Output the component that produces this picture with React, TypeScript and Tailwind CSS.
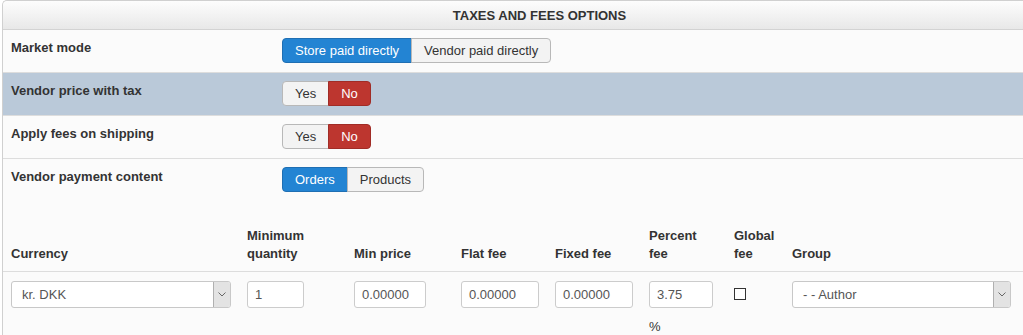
import React from "react";

function Seg({ items, active, color }: { items: string[]; active: number; color: "blue" | "red" }) {
  return (
    <div className="flex">
      {items.map((t, i) => {
        const on = i === active;
        const first = i === 0;
        const last = i === items.length - 1;
        const base = "h-[25px] px-[12px] text-[13px] leading-[23px] border";
        const round = `${first ? "rounded-l-[4px]" : ""} ${last ? "rounded-r-[4px]" : ""} ${!first ? "-ml-px" : ""}`;
        const col = on
          ? color === "blue"
            ? "bg-[#2384d3] border-[#1f6fb3] text-white"
            : "bg-[#bd362f] border-[#a02c26] text-white"
          : "bg-[#f3f3f3] border-[#b8b8b8] text-[#333]";
        return (
          <div key={t} className={`${base} ${round} ${col}`}>
            {t}
          </div>
        );
      })}
    </div>
  );
}

function Row({ label, children, hl }: { label: string; children: React.ReactNode; hl?: boolean }) {
  return (
    <div className={`flex ${hl ? "bg-[#bac9d9]" : ""} border-b border-[#dddddd] pt-[8px] h-[43px]`}>
      <div className="w-[279px] pl-[8px] pt-px text-[13px] font-bold leading-[18px] text-[#333]">{label}</div>
      <div>{children}</div>
    </div>
  );
}

function Select({ value, w }: { value: string; w: string }) {
  return (
    <div className={`${w} h-[27px] flex border border-[#c8c8c8] rounded-[3px] bg-white`}>
      <div className="flex-1 pl-[10px] text-[13px] leading-[25px] text-[#555]">{value}</div>
      <div className="w-[17px] bg-[#e3e3e3] border-l border-[#b0b0b0] flex items-center justify-center rounded-r-[2px]">
        <svg width="8" height="5" viewBox="0 0 8 5">
          <polyline points="0.5,0.5 4,4 7.5,0.5" fill="none" stroke="#666" strokeWidth="1" />
        </svg>
      </div>
    </div>
  );
}

function Input({ value, w }: { value: string; w: string }) {
  return (
    <div className={`${w} h-[27px] border border-[#cccccc] rounded-[3px] bg-white pl-[7px] text-[13px] leading-[25px] text-[#555]`}>
      {value}
    </div>
  );
}

export default function App() {
  const th = "pl-[8px] pb-[8px] text-[13px] font-bold leading-[18px] text-[#333] self-end";
  const td = "pl-[8px] pt-[9px]";
  return (
    <div className="w-[1023px] h-[335px] overflow-hidden bg-white font-['Liberation_Sans',Arial,sans-serif]">
      <div className="ml-[2px] border-l border-t border-[#d0d0d0] rounded-tl-[5px] bg-[#fbfbfb] h-[340px]">
        <div className="h-[29px] border-b border-[#d3d3d3] bg-gradient-to-b from-[#fdfdfd] to-[#e8e8e8] rounded-tl-[5px] text-center pl-[53px] text-[13px] font-bold leading-[29px] text-[#333]">
          TAXES AND FEES OPTIONS
        </div>
        <Row label="Market mode">
          <Seg items={["Store paid directly", "Vendor paid directly"]} active={0} color="blue" />
        </Row>
        <Row label="Vendor price with tax" hl>
          <Seg items={["Yes", "No"]} active={1} color="red" />
        </Row>
        <Row label="Apply fees on shipping">
          <Seg items={["Yes", "No"]} active={1} color="red" />
        </Row>
        <div className="flex pt-[8px] h-[68px]">
          <div className="w-[279px] pl-[8px] text-[13px] font-bold leading-[18px] text-[#333] pt-px">Vendor payment content</div>
          <Seg items={["Orders", "Products"]} active={0} color="blue" />
        </div>
        <div className="grid grid-cols-[236px_107px_107px_94px_94px_85px_58px_1fr] border-b border-[#dddddd]">
          <div className={th}>Currency</div>
          <div className={th}>Minimum<br />quantity</div>
          <div className={th}>Min price</div>
          <div className={th}>Flat fee</div>
          <div className={th}>Fixed fee</div>
          <div className={th}>Percent<br />fee</div>
          <div className={th}>Global<br />fee</div>
          <div className={th}>Group</div>
        </div>
        <div className="grid grid-cols-[236px_107px_107px_94px_94px_85px_58px_1fr]">
          <div className={td}><Select value="kr. DKK" w="w-[220px]" /></div>
          <div className={td}><Input value="1" w="w-[57px]" /></div>
          <div className={td}><Input value="0.00000" w="w-[72px]" /></div>
          <div className={td}><Input value="0.00000" w="w-[78px]" /></div>
          <div className={td}><Input value="0.00000" w="w-[78px]" /></div>
          <div className={td}>
            <Input value="3.75" w="w-[64px]" />
            <div className="text-[13px] leading-[18px] text-[#333] pt-[10px]">%</div>
          </div>
          <div className="pl-[8px] pt-[16px]">
            <div className="w-[12px] h-[12px] border border-[#333] bg-white" />
          </div>
          <div className={td}><Select value="- - Author" w="w-[219px]" /></div>
        </div>
      </div>
    </div>
  );
}
